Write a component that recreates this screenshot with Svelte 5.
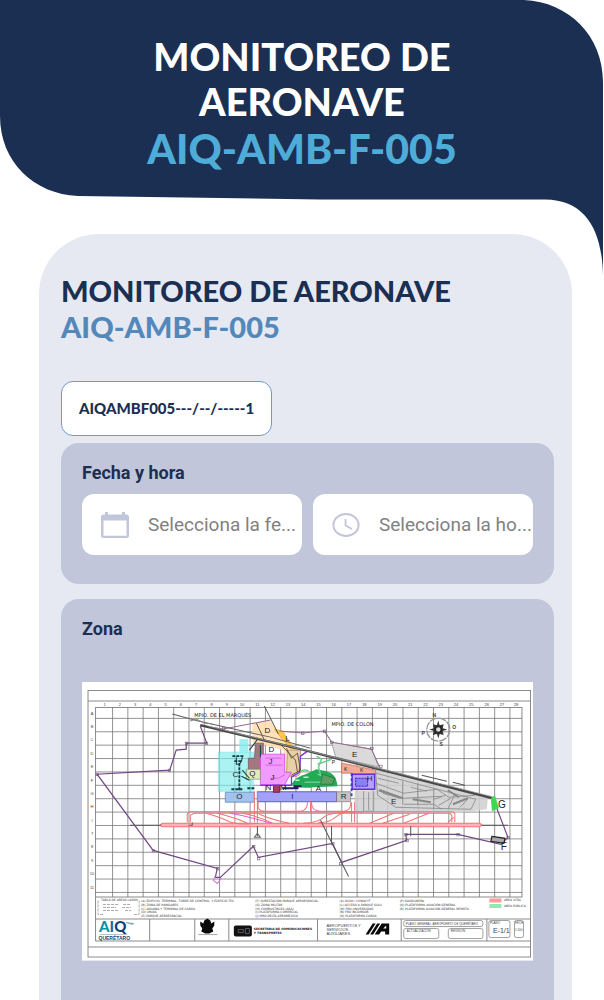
<script>
  const columns = Array.from({ length: 27 }, (_, i) => 112.5 + i * 15.25);
  const rows = Array.from({ length: 14 }, (_, i) => 718.3 + i * 13.36);
  const rowNames = ['A', 'B', 'C', 'D', 'E', 'F', 'G', 'H', 'I', '7', '8', '9', '10', '11'];
  const legends = [
    { x: 141, lines: ['(A) EDIFICIO, TERMINAL, TORRE DE CONTROL, Y EDIFICIO TEC.', '(B) ZONA DE HANGARES', '(C) ADUANA Y TERMINAL DE CARGA', '(D) URVAS', '(E) PARQUE AEROESPACIAL'] },
    { x: 255, lines: ['(F) SUBESTACION PARQUE AEROESPACIAL', '(G) ZONA MILITAR', '(H) COMBUSTIBLES (ASA)', '(I) PLATAFORMA COMERCIAL', '(J) MRO DELTA AEROMEXICO'] },
    { x: 339, lines: ['(K) OXXO / CONACYT', '(L) ACCESO A PARQUE SULU', '(M) FBO UNIVERSIDAD', '(N) FBO INCOMSOR', '(O) PLATAFORMA CARGA'] },
    { x: 399, lines: ['(P) GASOLINERA', '(Q) PLATAFORMA AVIACIÓN GENERAL', '(R) PLATAFORMA AVIACIÓN GENERAL REMOTA'] }
  ];
  const zones = [
    ['D', 267, 733], ['D', 271, 752], ['L', 287, 741], ['J', 270, 764], ['J', 272, 780], ['C', 235, 777],
    ['Q', 252, 776], ['O', 239, 799], ['N', 268, 790], ['M', 283, 790], ['A', 318, 791], ['I', 292, 799],
    ['R', 343, 799], ['H', 369, 781], ['E', 354, 757], ['E', 393, 804], ['G', 501, 808], ['F', 503, 850],
    ['K', 345, 771], ['K', 361, 772], ['P', 333, 764]
  ];
  const nodes = [[97, 774], [169, 770], [153, 850], [217, 868], [253, 846], [258, 858], [332, 843], [340, 863], [406, 840], [405, 834], [457, 834], [507, 837], [206, 743], [186, 743], [223, 728], [302, 733], [324, 731], [331, 742], [371, 748], [380, 766]];
</script>

<div class="page">
  <header>
    <svg class="shape" viewBox="0 0 604 275" preserveAspectRatio="none" aria-hidden="true">
      <path d="M0 0H524C569 2 603 36 603 82V275C602 232 587 200 545 199.500H320L78 196C34 194 0 162 0 116Z" fill="#1b2f52" />
    </svg>
    <h1>MONITOREO DE<br />AERONAVE <span>AIQ-AMB-F-005</span></h1>
  </header>

  <main>
    <h2>MONITOREO DE AERONAVE <span>AIQ-AMB-F-005</span></h2>
    <output class="folio">AIQAMBF005---/--/-----1</output>

    <section>
      <h3>Fecha y hora</h3>
      <div class="fields">
        <label class="field">
          <svg viewBox="0 0 28 28" aria-label="Fecha">
            <path d="M4 3.500V1h3v2.500h14V1h3v2.500h1.500Q28 3.500 28 6v19q0 2-2.500 2h-23Q0 27 0 25V6q0-2.500 2.500-2.500ZM2.500 9.500v15.200h23V9.500Z" fill="#c2c6da" fill-rule="evenodd" />
          </svg>
          <input type="text" placeholder="Selecciona la fe..." />
        </label>
        <label class="field">
          <svg viewBox="0 0 28 28" aria-label="Hora">
            <ellipse cx="14" cy="14" rx="12.600" ry="11" fill="none" stroke="#c2c6da" stroke-width="2" />
            <path d="M13.500 8v6.500l6.500 3.500" fill="none" stroke="#c2c6da" stroke-width="1.800" />
          </svg>
          <input type="text" placeholder="Selecciona la ho..." />
        </label>
      </div>
    </section>

    <section class="zone">
      <h3>Zona</h3>
      <svg class="map" viewBox="82 682 450 278" role="img" aria-label="Zona">
        <rect x="82" y="682" width="450" height="278" fill="#fff" />
        <g fill="none" stroke="#8b8b8b" stroke-width="1">
          <path d="M88 690.500H529.500V956.500H88ZM88 701H529.500M88 946.500H529.500M95.500 940.500V707.500H521V896.500H95.500M95.500 918.500H529.500M95.500 940.500H529.500M149.500 918.500V940M194.500 918.500V940M228.500 918.500V940M317 918.500V940M400.500 918.500V940M486 918.500V940" />
        </g>
        <g stroke="#626262" stroke-width=".8" opacity=".85">
          {#each columns as x}<path d={`M${x} 707.500V896.500`} />{/each}
          {#each rows as y}<path d={`M95.500 ${y}H521`} />{/each}
        </g>
        <g class="tiny" text-anchor="middle">
          {#each columns as x, i}<text x={x - 8} y="706">{i + 1}</text>{/each}
          <text x="515" y="706">28</text>
          {#each rowNames as name, i}<text x="92" y={714.5 + i * 13.36}>{name}</text>{/each}
        </g>

        <path d="M252 723L270 720 286 746 300 751 294 776H283L283 750 252 742Z" fill="#ffdfb0" opacity=".9" />
        <path d="M274 729l8 2 12 18-5-1Z" fill="#ffc64e" stroke="#d99b28" stroke-width=".6" />
        <path d="M287 750h13v22q-1 5-8 4h-6Z" fill="#e6d0a4" stroke="#9a8054" stroke-width=".6" />
        <path d="M331 742L371 749 379 767 335 757Z" fill="#dadada" stroke="#888" stroke-width=".7" />
        <path d="M374 769L487 797 486 809 456 813H354V790H374Z" fill="#cfcfcf" opacity=".85" />
        <path d="M218 752h35v39h-35Z" fill="#7fecec" opacity=".65" stroke="#3bd4da" stroke-width=".6" />
        <path d="M239 739h9v14h-9Z" fill="#86eef0" opacity=".8" />
        <path d="M255 743h8v27h-15v-12h6Z" fill="#a47780" stroke="#65444d" stroke-width=".6" />
        <path d="M260 754h24v18h7l-7 13h-24Z" fill="#f29bff" stroke="#d638e4" stroke-width=".7" />
        <path d="M246 769h14v10h-14Z" fill="#e1e9bd" stroke="#685" stroke-width=".6" />
        <path d="M225 792h29v10h-29Z" fill="#a3c2ec" stroke="#3f73ad" stroke-width=".6" />
        <path d="M257 791.500h79v10h-79Z" fill="#a2a2f8" stroke="#3f43d5" stroke-width=".8" />
        <path d="M336 791.500h14v10h-14Z" fill="#c8c1c8" stroke="#766" stroke-width=".6" />
        <path d="M341 763l11 2 23 5v4h-23v-1h-11Z" fill="#f0aa96" stroke="#c76649" stroke-width=".7" />
        <path d="M351.500 774h22.500v15h-22.500Z" fill="#b9a0ff" stroke="#642edb" stroke-width="1.500" />
        <path d="M355 778h12v8h-12Z" fill="#8a80f0" stroke="#3023bb" stroke-dasharray="2 1" />
        <path d="M291 784q5-8 14-10l11-5 10 2q9 3 10 10l1 5-24 1q-15 2-22-3Z" fill="#22aa54" />
        <path d="M295 780h4M303 777h5" stroke="#bdf0cd" stroke-width="1.500" />
        <path d="M316 756l5 3-3 8 2 8-3-1M299 772q5-4 9-1M304 782h17M317 764l14-5" fill="none" stroke="#67cf93" stroke-width="1.500" />
        <path d="M322 774l12 4-2 6h-12Z" fill="#5d9f62" stroke="#246c40" stroke-width=".7" />
        <g fill="none" stroke="#133d43" stroke-width="1.800">
          <path d="M232 756h12M234 761h8M239 763v28M231 789h11M247 788h8" stroke-dasharray="3 1" />
          <path d="M236 757v7q5 1 6-7M249 750l9-12M242 770l7 8M241 776l8 4M260 745v12" stroke-width="1" />
          <path d="M273 788h6M282 788h16M293 786h8" stroke="#252058" stroke-width="2" />
          <path d="M273 785v7h6v-7Z" fill="#a33e64" stroke="#7b264f" stroke-width="1" />
          <path d="M260 785h31V777l8-5 1-16 7-5" stroke="#8a2adf" stroke-width="1.300" />
          <path d="M265 758h16M265 765h17M270 778h8q8-4 6-4" stroke="#d14ae0" stroke-width=".7" />
          <path d="M286 748l5 10 6-5 3 17-9 5M280 744l15 16 2 12" stroke="#5c4f36" stroke-width=".9" />
          <path d="M256 723l8 17M264 706l14 28" stroke="#444" stroke-width=".9" />
          <path d="M351 773v24" stroke="#2941df" stroke-dasharray="3 2" />
        </g>
        <g fill="none" stroke="#878787" stroke-width=".8">
          <path d="M375 773l100 26-5 10-75-2-18-12Z M375 783l28 10 33-4 12 8 26-2M379 789l24 9 38-2M402 781v23M417 783v22M433 789v20M454 794l-7 15M467 799l-8 8M363 791v20h10v-20M368 792v18M403 804h30l8 5M377 778l21 5M410 787l16 4M433 799l12-4M382 793l17 5M438 805l12-7" />
          <path d="M378 790l24 8M412 799l18 3M447 790l11 7M452 804l15-6" stroke-width="2" />
        </g>

        <g fill="#f8b4b4" stroke="#ef7474" stroke-width="1">
          <path d="M162 823H479L481 824.500 479 826.500H162L160 825Z" />
          <g fill="none">
            <path d="M187 822V814Q188 811.500 191 811.500H451Q454 812 454 814V822M190 822V815L194 813H449L451 815V822M254 791V822M257 791V822M310 801V811M351 802V822M354 802V822M258 802Q256 811 264 811H300Q307 810 307 802M311 802Q311 811 320 811H343Q351 810 350 802" />
            <path d="M206 813q14 4 22 8t30 2M217 813q20 5 30 10M241 813q15 2 31 10M259 814q14 6 30 9M303 823q15-1 20-6t30-5M318 822q10 1 18-6t27-4M369 823l24-10M382 823l27-9M403 823l25-10M447 822l6-5" />
            <path d="M230 813q18 3 41 10" stroke="#e55ad2" />
          </g>
        </g>
        <path d="M130 825H161M481 825H507M257 826v10M331 826v17M410 826v10" stroke="#555" fill="none" />
        <path d="M254 837l3-4 3 4ZM188 825h4v-3" fill="none" stroke="#666" />

        <path d="M200 726L206.500 743H186V749L176 750 169.500 770 97 774 153 850 217 868 215 877 220 877 253 846 258 857 332 843 341 862 406 840 405 834H457L500 844 507 837 492 798" fill="none" stroke="#714982" stroke-width="1.200" />
        <path d="M200 726L223 729 270 720M279 731L302 733 324 731 331 742 371 749 378 766" fill="none" stroke="#9a6895" />
        <path d="M215 876l-2 4 4 3 4-5" fill="none" stroke="#d078d0" />
        <path d="M320 820L348 876" stroke="#555" />
        <path d="M200 725L300 749 492 798" fill="none" stroke="#494949" stroke-width="2.500" />
        <path d="M172 714L198 721 270 737 310 748" fill="none" stroke="#606060" stroke-width="1" />
        <path d="M208 726L305 750 490 796" fill="none" stroke="#a8a0a8" stroke-width=".7" />
        <path d="M190 721l6-2 8 4 8 1" fill="none" stroke="#888" />
        <path d="M421 775L446 781M452 782L464 785" stroke="#555" />
        <path d="M490 798l4-3 4 13-7 3Z" fill="#43d653" />
        <path d="M491 836l13 2-1 5-13-2Z" fill="#aaa" stroke="#222" stroke-width="1.200" />
        <g fill="none" stroke="#705877" stroke-width=".6">
          {#each nodes as [x, y]}<rect x={x - 1} y={y - 1} width="2.500" height="2.500" />{/each}
        </g>

        <g class="zone-name" text-anchor="middle">
          {#each zones as [name, x, y]}<text {x} {y} class:minor={name === 'K' || name === 'P'} class:edge={name === 'G' || name === 'F'}>{name}</text>{/each}
        </g>
        <g class="place">
          <text x="194" y="717">MPIO. DE EL MARQUÉS</text>
          <text x="331" y="726">MPIO. DE COLÓN</text>
        </g>

        <g transform="translate(437.500 729.500)">
          <circle r="11.500" fill="none" stroke="#999" stroke-width="1.400" stroke-dasharray="8 1" />
          <path d="M0-9L1.300-4.400 5.400-5.400 4.400-1.300 9 0 4.400 1.300 5.400 5.400 1.300 4.400 0 9-1.300 4.400-5.400 5.400-4.400 1.300-9 0-4.400-1.300-5.400-5.400-1.300-4.400Z" fill="#333" />
          <circle r="3" fill="#ddd" stroke="#222" stroke-width="1.500" />
          <g class="compass" text-anchor="middle"><text x="-4" y="-13">N</text><text x="16" y="-1">O</text><text x="3" y="16">S</text><text x="-15" y="5">P</text></g>
        </g>

        <g class="legend">
          {#each legends as group}
            {#each group.lines as line, i}<text x={group.x} y={901.5 + i * 3.8}>{line}</text>{/each}
          {/each}
          <text x="101" y="901">TABLA DE AREAS LADOS</text>
          <text x="503" y="901">AREA VITAL</text>
          <text x="503" y="907">AREA PÚBLICA</text>
        </g>
        <path d="M98 900v14h5M139 900v14h-5M103 904h16M103 907h13M103 910h15M123 904h8M122 907h9M125 910h6" fill="none" stroke="#888" stroke-width=".7" stroke-dasharray="3 1" />
        <rect x="488.500" y="898" width="12" height="4" fill="#ff9a9a" />
        <rect x="488.500" y="903.500" width="12" height="4" fill="#8deab0" />

        <text class="logo" x="99" y="931">A<tspan class="logo-mid">I</tspan><tspan class="logo-end">Q</tspan></text>
        <path d="M126 922l8 1-2 1ZM100 934h27" fill="#43a8bd" stroke="#8ca5b3" stroke-width=".7" />
        <text class="city" x="98.500" y="939">QUERÉTARO</text>
        <path d="M207 918l3 2 1 3 3-2v4l-2 3 1 3-4 2h-4l-4-2 1-3-2-3v-4l3 2 1-3Z" fill="#090909" />
        <path d="M198 934h19" stroke="#aaa" />
        <rect x="233.500" y="925" width="18" height="11" rx="2" fill="#121212" />
        <path d="M238 929h5v3h-5ZM245 928h4v5h-4Z" fill="none" stroke="#777" stroke-width=".7" />
        <g class="owner"><text x="253.500" y="929">SECRETARIA DE COMUNICACIONES</text><text x="253.500" y="933">Y TRANSPORTES</text></g>
        <g class="agency"><text x="326" y="926">AEROPUERTOS Y</text><text x="326" y="930">SERVICIOS</text><text x="326" y="934">AUXILIARES</text></g>
        <path d="M365 934l7-11h3l-7 11ZM369.500 934l7-11h3l-7 11ZM374 934l7-11h7.500v11h-4v-3h-4l-2 3Z" fill="#080808" />
        <path d="M382.500 928h3v-3Z" fill="#fff" />
        <g fill="none" stroke="#888" stroke-width=".8">
          <rect x="403" y="920" width="79" height="6" rx="2" /><rect x="403" y="928" width="35" height="10" rx="2" /><rect x="447.500" y="928" width="34.500" height="10" rx="2" />
          <rect x="488" y="920" width="21" height="17" rx="2" /><rect x="513.500" y="920" width="9" height="17" rx="2" />
        </g>
        <g class="plate"><text x="405" y="924">PLANO GENERAL: AEROPUERTO DE QUERÉTARO</text><text x="406" y="931">ACTUALIZACION</text><text x="450" y="931">REVISION</text><text x="489" y="923">PLANO</text><text x="514" y="923">FECH</text><text x="514" y="930">1:100</text></g>
        <text class="sheet" x="492" y="932">E-1/1</text>
      </svg>
    </section>
  </main>
</div>

<style>
  :global(body) { margin: 0; background: #fff; }
  .page { min-height: 100vh; display: flex; flex-direction: column; font-family: Roboto, sans-serif; color: #1b2f52; }
  header { position: relative; box-sizing: border-box; min-height: 234px; padding-top: 34px; text-align: center; }
  .shape { position: absolute; top: 0; left: 0; width: 100%; height: 275px; }
  h1, h2 { margin: 0; font-family: Lato, sans-serif; font-weight: 900; }
  h1 { position: relative; color: #fff; font-size: 38px; line-height: 45px; }
  h1 span, h2 span { display: block; }
  h1 span { color: #4eacd9; font-size: 41px; line-height: 50px; }
  main { flex: 1; display: flex; flex-direction: column; box-sizing: border-box; margin: 0 32px 0 39px; padding: 39px 18px 0 22px; position: relative; background: #e6e9f2; border-radius: 60px 60px 0 0; }
  h2 { font-size: 29px; line-height: 36px; }
  h2 span { color: #5488bb; }
  .folio { align-self: flex-start; box-sizing: border-box; height: 55px; margin: 36px 0 7px; padding: 0 17px; border: 1px solid #6d9bc7; border-radius: 12px; background: #fff; font: 900 15px/53px Lato, sans-serif; }
  section { box-sizing: border-box; padding: 20px 21px 29px; border-radius: 18px; background: #c2c6da; }
  h3 { margin: 0; font-size: 18px; line-height: 20px; font-weight: 700; }
  .fields { display: grid; grid-template-columns: 1fr 1fr; gap: 11px; margin-top: 11px; }
  .field { display: flex; align-items: center; gap: 19px; box-sizing: border-box; min-width: 0; height: 61px; padding-left: 19px; border-radius: 12px; background: #fff; }
  .field svg { flex: none; width: 28px; height: 28px; }
  input { flex: 1; min-width: 0; width: 0; padding: 0; border: 0; outline: 0; background: transparent; font: 19px/24px Roboto, sans-serif; color: #1b2f52; }
  input::placeholder { color: #818181; opacity: 1; }
  .zone { flex: 1; margin-top: 15px; padding-bottom: 40px; border-radius: 18px 18px 0 0; }
  .map { display: block; width: 100%; margin-top: 43px; }
  .map text { font-family: "Liberation Sans", sans-serif; fill: #444; }
  .map .tiny text { font-size: 4px; }
  .map .legend text { font-family: "DejaVu Sans", sans-serif; font-size: 3px; fill: #333; }
  .map .plate text { font-size: 3px; }
  .map .place text { font-family: "DejaVu Sans", sans-serif; font-size: 5px; fill: #222; }
  .map .zone-name text { font-size: 8px; fill: #222; }
  .map .zone-name .minor { font-size: 5px; }
  .map .zone-name .edge { font-size: 10px; }
  .map .compass text { font-size: 5px; font-weight: 700; }
  .map .logo { font: 900 15px Lato, sans-serif; fill: #0891aa; }
  .map .logo-mid { fill: #2369a0; }
  .map .logo-end { fill: #133f72; }
  .map .city { font-size: 5px; font-weight: 700; fill: #174473; }
  .map .owner text { font-family: "DejaVu Sans", sans-serif; font-size: 3px; font-weight: 700; fill: #111; }
  .map .agency text { font-size: 4px; }
  .map .sheet { font-size: 7px; }
</style>
